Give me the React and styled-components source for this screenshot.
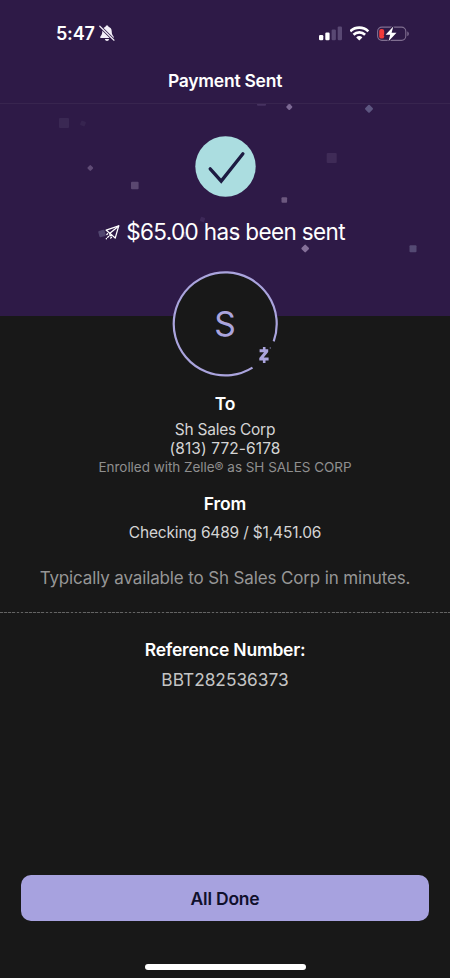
import React from 'react';
import styled, { createGlobalStyle } from 'styled-components';

const GlobalStyle = createGlobalStyle`
	* {
		box-sizing: border-box;
	}
	body {
		margin: 0;
		background: #181818;
		font-family: Inter, "Liberation Sans", sans-serif;
	}
`;
const Screen = styled.div`
	display: flex;
	flex-direction: column;
	width: 450px;
	height: 978px;
	overflow: hidden;
	background: #181818;
`;
const Hero = styled.header`
	position: relative;
	height: 316px;
	background: #2e1a47;
`;
const StatusBar = styled.div`
	display: flex;
	justify-content: space-between;
	align-items: center;
	height: 60px;
	padding: 7px 41px 0 56px;
`;
const StatusGroup = styled.div`
	display: flex;
	align-items: center;
	gap: ${({ $gap }) => $gap}px;
`;
const TitleBar = styled.div`
	display: flex;
	align-items: center;
	justify-content: center;
	height: 44px;
	padding-bottom: 2px;
	border-bottom: 1px solid #38254f;
`;
const Text = styled.p`
	margin: ${({ $top = 0 }) => $top}px 0 0;
	color: ${({ $color = '#fff' }) => $color};
	font-size: ${({ $size }) => $size}px;
	font-weight: ${({ $weight = 400 }) => $weight};
	line-height: ${({ $line = 20 }) => $line}px;
	letter-spacing: ${({ $track = 0 }) => $track}px;
	white-space: nowrap;
`;
const Success = styled.div`
	position: relative;
	display: flex;
	flex-direction: column;
	align-items: center;
	padding-top: 32px;
`;
const Message = styled.div`
	display: flex;
	align-items: center;
	gap: 6px;
	margin-top: 20px;
`;
const Confetti = styled.svg`
	position: absolute;
	top: 104px;
	left: 0;
`;
const Details = styled.main`
	position: relative;
	display: flex;
	flex-direction: column;
	align-items: center;
	flex: 1;
	margin-top: -45px;
`;
const Avatar = styled.div`
	display: grid;
	place-items: center;
	width: 106px;
	height: 106px;
	> * {
		grid-area: 1 / 1;
	}
`;
const Divider = styled.div`
	width: 100%;
	height: 1px;
	margin-top: 22px;
	background: repeating-linear-gradient(90deg, #636363 0 2.6px, #242424 2.6px 4.15px);
`;
const Footer = styled.footer`
	display: flex;
	flex-direction: column;
	align-items: center;
	padding: 0 21px 8px;
`;
const DoneButton = styled.button`
	width: 100%;
	height: 46px;
	padding: 0;
	border: 0;
	border-radius: 10px;
	background: #a7a2df;
	color: #10102c;
	font-family: inherit;
	font-size: 17.5px;
	font-weight: 600;
	letter-spacing: -0.2px;
`;
const HomeIndicator = styled.div`
	width: 161px;
	height: 6px;
	margin-top: 43px;
	border-radius: 3px;
	background: #fff;
`;

const BellOff = () => (
	<svg width="16" height="17" viewBox="0 0 16 17">
		<path d="M8 .6c.9 0 1.4.5 1.5 1.2 2 .6 3.1 2.2 3.2 4.2.1 3 .6 4 1.7 5.2.8.9.4 1.900-.7 1.900H2.300c-1.100 0-1.500-1-.7-1.900C2.700 10 3.200 9 3.300 6c.1-2 1.200-3.600 3.200-4.200C6.600 1.100 7.100.6 8 .6z" fill="#f3eff8" />
		<path d="M5.900 14h4.200c-.2 1.200-1 1.900-2.100 1.900s-1.900-.7-2.100-1.900z" fill="#f3eff8" />
		<path d="M.8 1.200l14.200 14" stroke="#2e1a47" strokeWidth="2.800" />
		<path d="M.8 1.200l14.200 14" stroke="#f3eff8" strokeWidth="1.200" strokeLinecap="round" />
	</svg>
);

const Signal = () => (
	<svg width="23" height="15" viewBox="0 0 23 15">
		<rect x="0" y="9" width="4.300" height="5.300" rx="1.200" fill="#fff" />
		<rect x="6.300" y="6.600" width="4.300" height="7.700" rx="1.200" fill="#fff" />
		<rect x="12.600" y="3.600" width="4.300" height="10.700" rx="1.200" fill="#594873" />
		<rect x="18.700" y=".4" width="4.300" height="13.900" rx="1.200" fill="#594873" />
	</svg>
);

const Wifi = () => (
	<svg width="20" height="15" viewBox="0.700 0 20 15" fill="none" stroke="#fff" strokeWidth="2.600">
		<path d="M1 5.300a12.800 12.800 0 0 1 18 0" />
		<path d="M4.200 8.700a8.300 8.300 0 0 1 11.600 0" />
		<path d="M10 14.500L6.900 11.400a4.400 4.400 0 0 1 6.200 0z" fill="#fff" stroke="none" />
	</svg>
);

const Battery = () => (
	<svg width="32" height="16" viewBox="0 0 32 16">
		<rect x=".6" y="1.100" width="28.200" height="13.300" rx="4.300" fill="none" stroke="#806f91" strokeWidth="1.100" />
		<path d="M30.300 5.500c2 .6 2 4 0 4.600z" fill="#806f91" />
		<rect x="2.200" y="2.900" width="5" height="9.700" rx="2.200" fill="#f2393a" />
		<path d="M16.300.4L8.600 8.800h4.600l-1.700 6.400 8-8.400h-4.900z" fill="#fff" stroke="#2e1a47" strokeWidth="2" paintOrder="stroke" />
	</svg>
);

const CheckBadge = () => (
	<svg width="61" height="61" viewBox="0 0 61 61">
		<circle cx="30.500" cy="30.500" r="30.200" fill="#abdde0" />
		<path d="M15.200 32.800l11 12.300 21.700-27.300" fill="none" stroke="#1d1b42" strokeWidth="3.300" strokeLinecap="round" strokeLinejoin="miter" />
	</svg>
);

const PaperPlane = () => (
	<svg width="15" height="15" viewBox="0 0 15 15" fill="none" stroke="#fff" strokeWidth="1.300" strokeLinejoin="round" strokeLinecap="round">
		<path d="M13.700.9L1.200 5.200l3.700 3 2 1.900 3.300 3z" />
		<path d="M13.700.9L4.900 8.200v2.600l2-.7" />
		<path d="M2.700 8.700L1.200 10.200M3.500 11.500l-2.200 2.200M6.500 12.200l-1.700 1.800" strokeDasharray="1.200 1.700" />
	</svg>
);

// open ring leaves room for the Zelle mark at the lower right
const Ring = () => (
	<svg width="106" height="106" viewBox="0 0 106 106">
		<circle cx="53" cy="53" r="52" fill="#181818" />
		<path d="M101.700 70.300A51.500 51.500 0 1 0 80.500 96.600" fill="none" stroke="#aaa4dd" strokeWidth="2.200" />
		<path d="M87.600 78.200h8.600v2.700l-4.500 5.700h4.900v3h-9.300v-2.600l4.700-5.800h-4.400z" fill="#aaa4dd" />
		<path d="M92.200 76v3M92.200 88.500v3.500" stroke="#aaa4dd" strokeWidth="2.600" />
		<circle cx="98.300" cy="77" r=".7" fill="#77739a" />
	</svg>
);

const pieces = [
	{ x: 64, y: 19, size: 10, color: '#3a2853' },
	{ x: 83, y: 19.500, size: 5, color: '#36244f', turn: 20 },
	{ x: 90.300, y: 64, size: 4.600, color: '#5f4b75', turn: 45 },
	{ x: 134.800, y: 81.500, size: 7.600, color: '#5a4770' },
	{ x: 261.500, y: 0, size: 9, height: 3.500, color: '#463260' },
	{ x: 289.300, y: 3, size: 4.800, color: '#7c6994', turn: 45 },
	{ x: 369, y: 4.800, size: 6.200, color: '#5d5680', turn: 45 },
	{ x: 331.700, y: 54, size: 10, color: '#3f2b57' },
	{ x: 284.300, y: 96, size: 5.600, color: '#6c587f' },
	{ x: 202.500, y: 115.500, size: 4.500, color: '#3d2858', turn: 20 },
	{ x: 102, y: 129.500, size: 6.500, color: '#51466f', turn: -15 },
	{ x: 184, y: 130.500, size: 5, color: '#54426d' },
	{ x: 236, y: 130, size: 5, color: '#54426d', turn: 20 },
	{ x: 305.200, y: 144.500, size: 6, color: '#857099', turn: 45 },
	{ x: 413, y: 144.800, size: 7, color: '#544a73' },
];

export default function App() {
	return (
		<>
			<GlobalStyle />
			<Screen>
				<Hero>
					<StatusBar>
						<StatusGroup $gap={4}>
							<Text as="span" $size={18} $weight={600} $track={-0.2}>5:47</Text>
							<BellOff />
						</StatusGroup>
						<StatusGroup $gap={7.5}>
							<Signal />
							<Wifi />
							<Battery />
						</StatusGroup>
					</StatusBar>
					<TitleBar>
						<Text as="h1" $size={17.5} $weight={600} $track={-0.25}>Payment Sent</Text>
					</TitleBar>
					<Confetti width="450" height="212">
						{pieces.map(({ x, y, size, height = size, color, turn = 0 }) => (
							<rect
								key={`${x}-${y}`}
								x={x - size / 2}
								y={y - height / 2}
								width={size}
								height={height}
								rx="1"
								fill={color}
								transform={`rotate(${turn} ${x} ${y})`}
							/>
						))}
					</Confetti>
					<Success>
						<CheckBadge />
						<Message>
							<PaperPlane />
							<Text $size={22.5} $line={30} $track={-0.64}>$65.00 has been sent</Text>
						</Message>
					</Success>
				</Hero>
				<Details>
					<Avatar>
						<Ring />
						<Text as="span" $size={33.5} $line={36} $color="#aaa4dd">S</Text>
					</Avatar>
					<Text as="h2" $size={17.5} $weight={600} $track={-0.2} $top={17}>To</Text>
					<Text $size={15.5} $color="#d4d4d4" $line={19} $track={-0.25} $top={6}>Sh Sales Corp</Text>
					<Text $size={15.5} $color="#d4d4d4" $line={19} $track={0.1}>(813) 772-6178</Text>
					<Text $size={13.5} $color="#8f8f8f" $line={19} $track={-0.03}>Enrolled with Zelle® as SH SALES CORP</Text>
					<Text as="h2" $size={17.5} $weight={600} $track={-0.1} $top={17}>From</Text>
					<Text $size={15.5} $color="#d4d4d4" $track={-0.17} $top={9}>Checking 6489 / $1,451.06</Text>
					<Text $size={17} $color="#969696" $line={24} $track={-0.14} $top={23}>Typically available to Sh Sales Corp in minutes.</Text>
					<Divider />
					<Text as="h2" $size={17.5} $weight={600} $track={-0.22} $top={27}>Reference Number:</Text>
					<Text $size={17.3} $color="#c4c4c4" $top={10}>BBT282536373</Text>
				</Details>
				<Footer>
					<DoneButton>All Done</DoneButton>
					<HomeIndicator />
				</Footer>
			</Screen>
		</>
	);
}
